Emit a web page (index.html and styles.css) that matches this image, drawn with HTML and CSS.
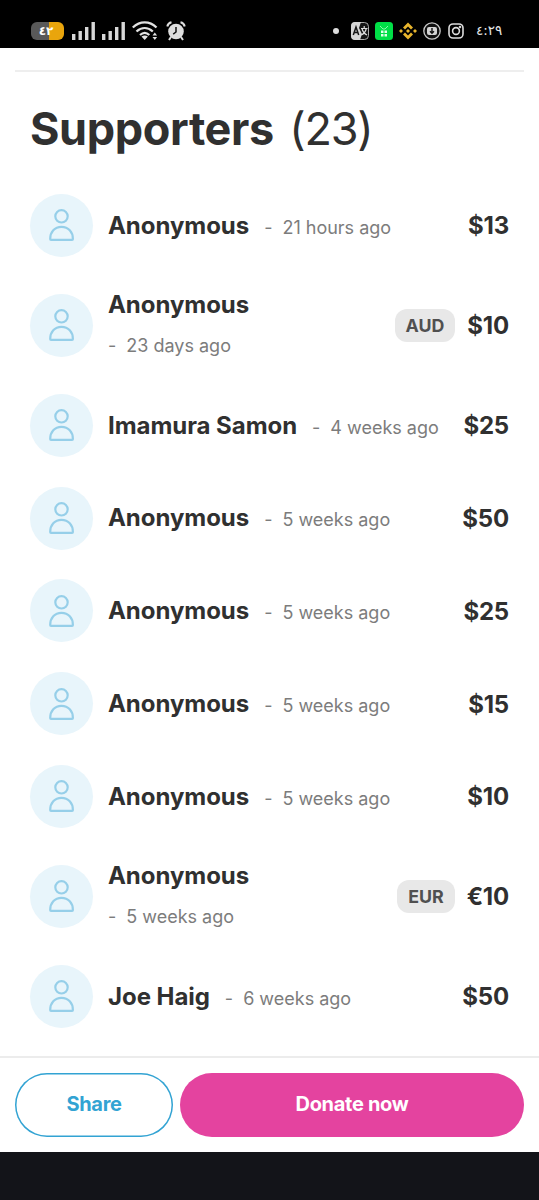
FILE: index.html
```html
<!DOCTYPE html>
<html lang="en">
<head>
<meta charset="utf-8">
<title>Supporters</title>
<link rel="stylesheet" href="styles.css">
</head>
<body>
<svg class="defs" width="0" height="0" aria-hidden="true">
  <symbol id="person" viewBox="0 0 26 34">
    <circle cx="12.5" cy="8.3" r="6.2"/>
    <path d="M1.200 31c0-7 4.400-12.100 11.300-12.100S23.900 24 23.900 31q0 .8-.8.8H2q-.8 0-.8-.8z"/>
  </symbol>
</svg>
<header class="status">
  <div class="status-left">
    <span class="battery">٤٢</span>
    <svg class="signal" width="24" height="20" viewBox="0 0 24 20" fill="#d8d8d8"><path d="M0 13h3.400v6H0zM6.500 10h3.400v9H6.500zM13 6h3.400v13H13zM19.500 1h3.400v18h-3.400z"/></svg>
    <svg class="signal second" width="24" height="20" viewBox="0 0 24 20" fill="#d8d8d8"><path d="M0 13h3.400v6H0zM6.500 10h3.400v9H6.500zM13 6h3.400v13H13zM19.500 1h3.400v18h-3.400z"/></svg>
    <svg class="wifi" width="26" height="20" viewBox="0 0 26 20"><g fill="none" stroke="#e2e2e2" stroke-width="2.300"><path d="M.8 6.500C8-.3 17.500-.3 24.500 6.500M4.500 10.500c5-4.600 11.300-4.600 16.300 0M8 14c3-2.700 6.500-2.700 9.300 0"/></g><path fill="#e2e2e2" d="M9.500 15.500q3.200-2 6.400 0L12.700 19zM20.500 14.500l2.300-3 2.300 3zM20.500 16l2.300 3 2.300-3z"/></svg>
    <svg class="alarm" width="20" height="20" viewBox="0 0 20 20"><circle cx="10" cy="10.500" r="7.800" fill="#dedede"/><path d="M1.300 5.500Q2 2 5.500 1.300M18.700 5.500Q18 2 14.500 1.300M5 16l-2 3M15 16l2 3" fill="none" stroke="#dedede" stroke-width="2"/><path d="M10 6v5l-2.800 2.200" fill="none" stroke="#111" stroke-width="1.500"/></svg>
  </div>
  <div class="status-right">
    <i class="dot"></i>
    <svg class="app" width="18" height="18" viewBox="0 0 18 18"><rect x=".5" y=".5" width="17" height="17" rx="4" fill="#151515" stroke="#aaa"/><path d="M4 0h6l-2 6 3 6-2 6H4q-4 0-4-4V4q0-4 4-4z" fill="#d5d5d5"/><path d="M2.300 13L5 5l2.700 8M3.300 10.500h3.500" fill="none" stroke="#151515" stroke-width="1.500"/><path d="M10 6.500h6.500M13.200 4v2.500M15.300 6.500q-1 4.500-5 6.500M11 6.500q1 4.500 5 6.500" fill="none" stroke="#ddd" stroke-width="1.200"/></svg>
    <svg class="app" width="18" height="18" viewBox="0 0 18 18"><rect width="18" height="18" rx="3.500" fill="#00df47"/><path d="M5 4l3 3h2l3-3" fill="none" stroke="#8cf5a9"/><path d="M6 8.500h2.500V11H6zM9.500 8.500H12V11H9.500zM6 12h2.500v2.500H6zM9.500 12H12v2.500H9.500z" fill="#dfffe7"/></svg>
    <svg class="app" width="18" height="18" viewBox="0 0 18 18" fill="#e8b52d"><path d="M9 .5l5 5-2 2-3-3-3 3-2-2zM9 17.500l5-5-2-2-3 3-3-3-2 2zM9 7l2 2-2 2-2-2zM2 7l2 2-2 2-2-2zM16 7l2 2-2 2-2-2z"/></svg>
    <svg class="app" width="18" height="18" viewBox="0 0 18 18"><circle cx="9" cy="9" r="8.200" fill="#111" stroke="#c9c9c9" stroke-width="1.300"/><rect x="4" y="5" width="10" height="8" rx="2" fill="#d4d4d4"/><path d="M9 6v5M7 9.200l2 2 2-2" fill="none" stroke="#111" stroke-width="1.400"/></svg>
    <svg class="app" width="16" height="16" viewBox="0 0 16 16" fill="none" stroke="#ddd" stroke-width="1.600"><rect x="1" y="1" width="14" height="14" rx="4"/><circle cx="8" cy="8" r="3.400"/><circle cx="12" cy="4" r=".5"/></svg>
    <span class="clock">٤:٢٩</span>
  </div>
</header>
<main>
  <h1>Supporters <span class="count">(23)</span></h1>
  <ul class="list">
    <li class="row"><span class="avatar"><svg><use href="#person"/></svg></span><div class="who"><b>Anonymous</b><span class="ago"><i>-</i>21 hours ago</span></div><strong>$13</strong></li>
    <li class="row tall"><span class="avatar"><svg><use href="#person"/></svg></span><div class="who"><b>Anonymous</b><span class="ago"><i>-</i>23 days ago</span></div><em>AUD</em><strong>$10</strong></li>
    <li class="row"><span class="avatar"><svg><use href="#person"/></svg></span><div class="who"><b>Imamura Samon</b><span class="ago"><i>-</i>4 weeks ago</span></div><strong>$25</strong></li>
    <li class="row"><span class="avatar"><svg><use href="#person"/></svg></span><div class="who"><b>Anonymous</b><span class="ago"><i>-</i>5 weeks ago</span></div><strong>$50</strong></li>
    <li class="row"><span class="avatar"><svg><use href="#person"/></svg></span><div class="who"><b>Anonymous</b><span class="ago"><i>-</i>5 weeks ago</span></div><strong>$25</strong></li>
    <li class="row"><span class="avatar"><svg><use href="#person"/></svg></span><div class="who"><b>Anonymous</b><span class="ago"><i>-</i>5 weeks ago</span></div><strong>$15</strong></li>
    <li class="row"><span class="avatar"><svg><use href="#person"/></svg></span><div class="who"><b>Anonymous</b><span class="ago"><i>-</i>5 weeks ago</span></div><strong>$10</strong></li>
    <li class="row tall"><span class="avatar"><svg><use href="#person"/></svg></span><div class="who"><b>Anonymous</b><span class="ago"><i>-</i>5 weeks ago</span></div><em>EUR</em><strong>€10</strong></li>
    <li class="row"><span class="avatar"><svg><use href="#person"/></svg></span><div class="who"><b>Joe Haig</b><span class="ago"><i>-</i>6 weeks ago</span></div><strong>$50</strong></li>
  </ul>
</main>
<footer class="actions">
  <button class="share">Share</button>
  <button class="donate">Donate now</button>
</footer>
<div class="navbar"></div>
</body>
</html>
```
FILE: styles.css
```css
* { box-sizing: border-box; }
body {
  margin: 0;
  height: 1200px;
  display: flex;
  flex-direction: column;
  overflow: hidden;
  background: #fff;
  color: #303030;
  font-family: Inter, "Noto Sans", sans-serif;
}
.defs { display: none; }
.status {
  height: 48px;
  flex: none;
  background: #000;
  display: flex;
  justify-content: space-between;
  padding: 14px 36px 0 31px;
}
.status-left, .status-right { display: flex; align-items: center; height: 34px; }
.battery {
  width: 33px;
  height: 18px;
  border-radius: 6px;
  background: linear-gradient(90deg, #595959 56%, #e9a50c 56%);
  color: #fff;
  font: 700 12px/19px "DejaVu Sans", sans-serif;
  text-align: center;
  padding-right: 3px;
}
.signal { margin-left: 8px; }
.second { margin-left: 6px; }
.wifi { margin-left: 6px; }
.alarm { margin-left: 8px; }
.dot { width: 6px; height: 6px; border-radius: 50%; background: #ddd; margin-right: 12px; }
.app { margin-right: 6px; }
.app:nth-last-child(2) { margin-left: 1px; margin-right: 5px; }
.clock { width: 27px; margin-left: 7px; color: #e6e6e6; font: 13.500px/18px "DejaVu Sans", sans-serif; white-space: nowrap; padding-bottom: 2px; }
main { height: 1008px; flex: none; margin: 0 15px; padding: 22px 15px 0; }
main::before { content: ""; display: block; height: 2px; margin: 0 -15px; background: #eee; }
h1 {
  margin: 28px 0 0;
  height: 58px;
  font-size: 45px;
  line-height: 58px;
  font-weight: 700;
  letter-spacing: -.35px;
  white-space: nowrap;
}
.count { font-weight: 400; margin-left: 5px; letter-spacing: -1.2px; }
.list { list-style: none; margin: 36px 0 0; padding: 0; display: flex; flex-direction: column; gap: 30px; }
.row { display: flex; align-items: center; height: 62.8px; }
.tall { height: 77px; }
.avatar {
  width: 63px;
  height: 63px;
  flex: none;
  border-radius: 50%;
  background: #e8f5fb;
  display: flex;
  justify-content: center;
  align-items: center;
}
.avatar svg { width: 26px; height: 34px; fill: none; stroke: #96cfe9; stroke-width: 2.2; }
.who { flex: 1; margin-left: 15px; padding-top: 3px; display: flex; align-items: baseline; gap: 15px; white-space: nowrap; }
.who b { font-size: 24px; line-height: 30px; font-weight: 700; letter-spacing: -.05px; }
.ago { font-size: 18px; line-height: 30px; color: #7c7c7c; }
.ago i { font-style: normal; margin-right: 10px; }
.tall .who { flex-direction: column; gap: 11px; padding-top: 1px; }
strong { font-size: 24px; font-weight: 700; line-height: 30px; letter-spacing: -.2px; padding-top: 2px; }
em {
  font-style: normal;
  font-size: 17.8px;
  font-weight: 700;
  line-height: 33px;
  padding: 0 11px;
  border-radius: 12px;
  background: #e8e8e8;
  color: #505050;
  margin-right: 12px;
}
.actions {
  height: 96px;
  flex: none;
  display: flex;
  gap: 7px;
  padding: 15px 15px 15px;
  border-top: 2px solid #ececec;
}
button {
  height: 64px;
  padding: 0 0 2px;
  border: 0;
  border-radius: 32px;
  font: 700 20px Inter, sans-serif;
  letter-spacing: -.3px;
}
.share { width: 158px; box-shadow: inset 0 0 0 1.5px #32a3d3; background: #fff; color: #32a3d3; }
.donate { flex: 1; background: #e4439f; color: #fff; }
.navbar { flex: 1; background: #131419; }
```
